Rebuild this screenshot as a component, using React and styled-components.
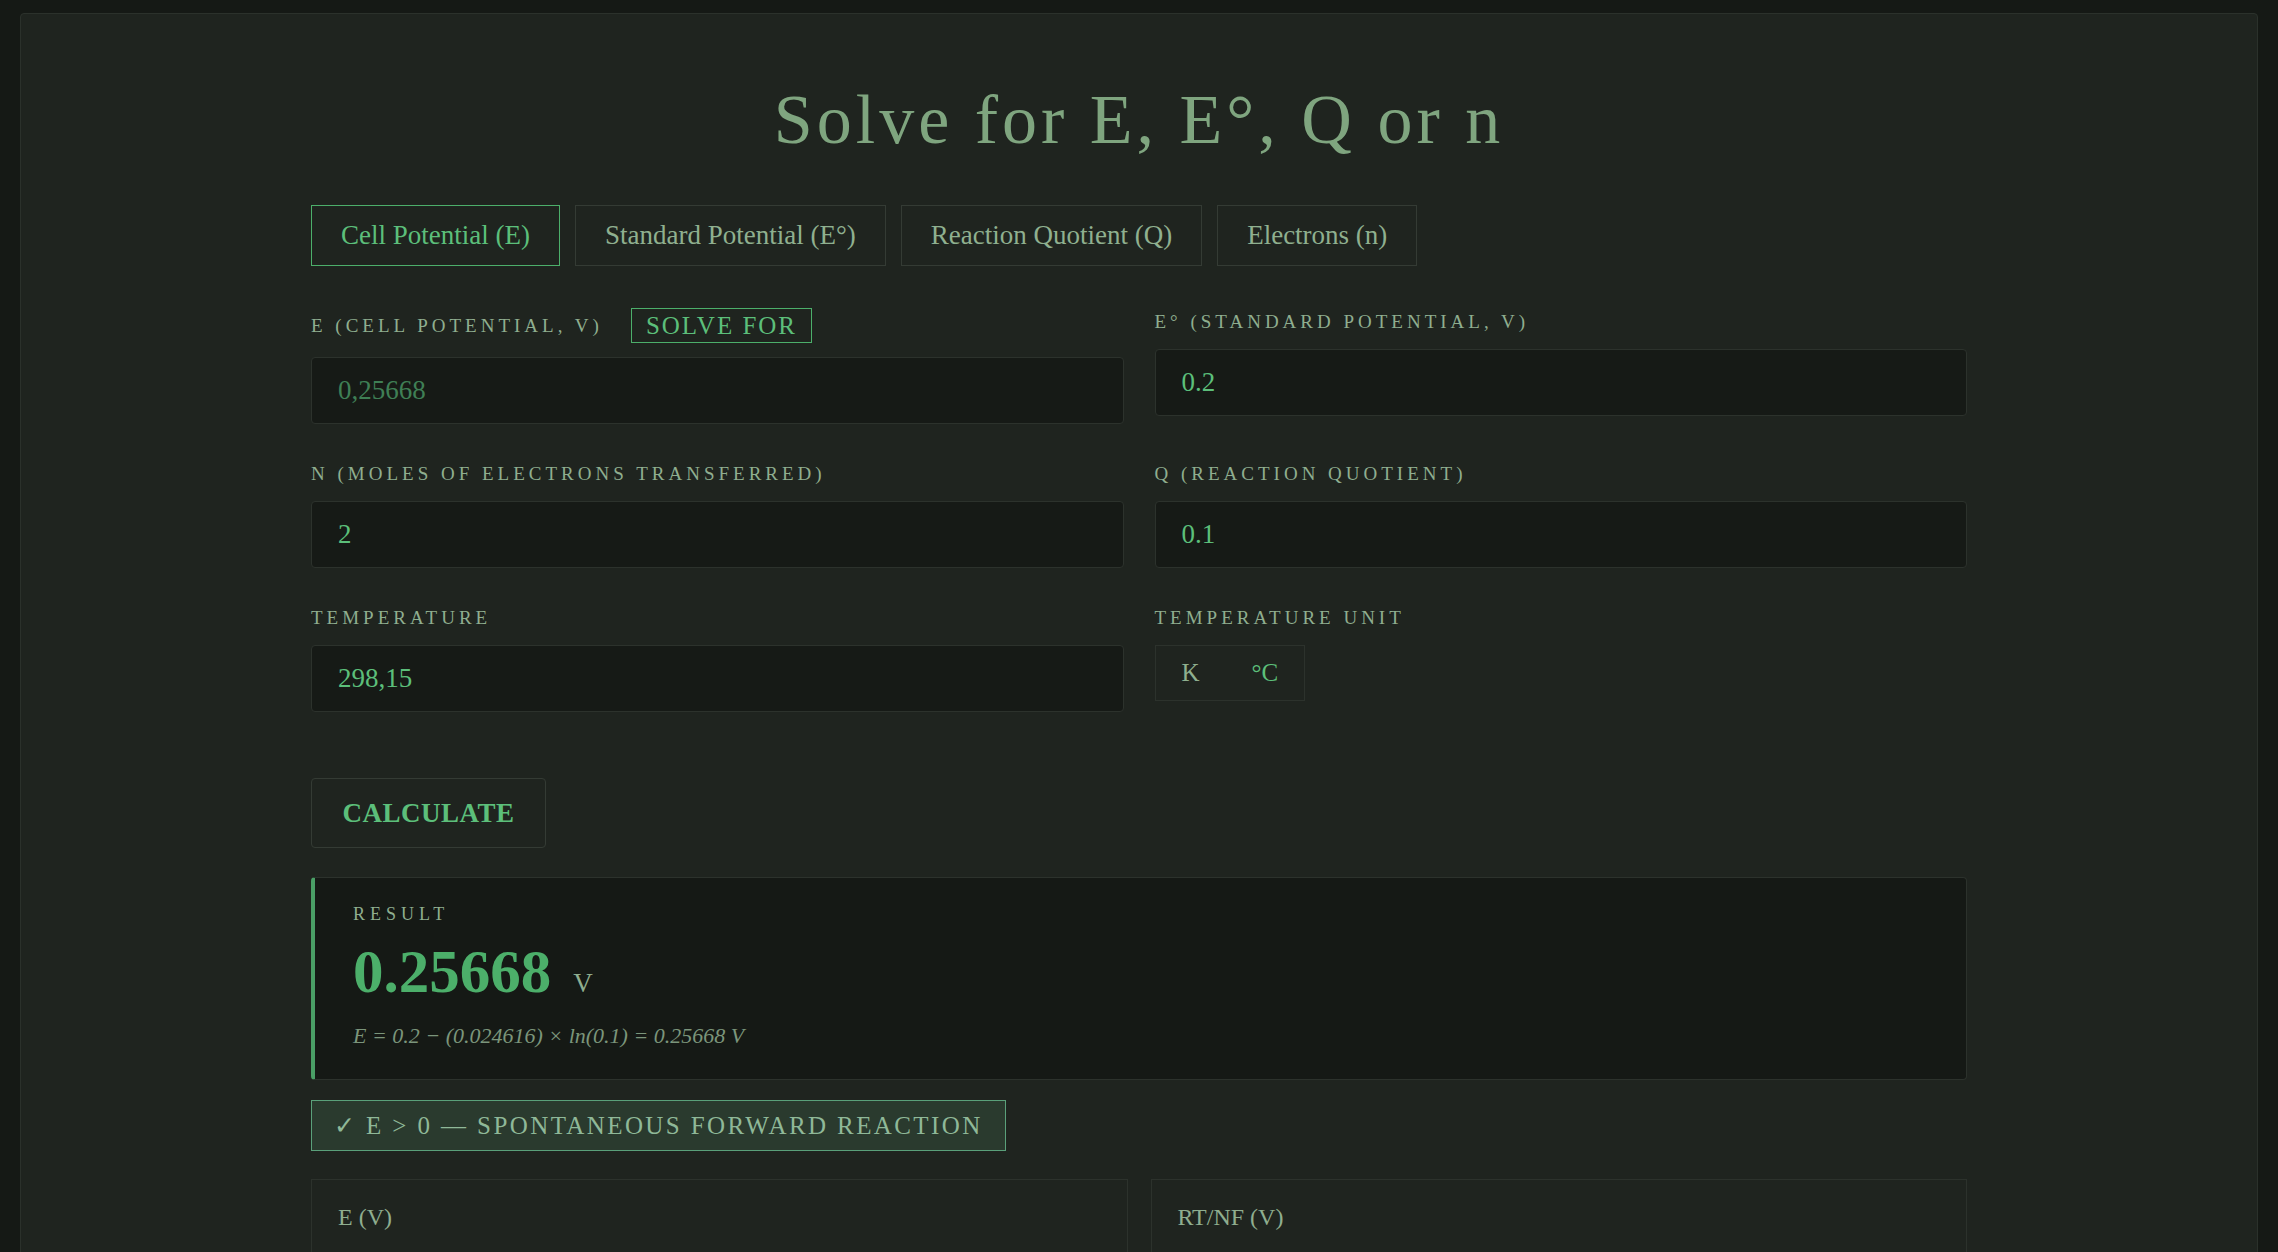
import React from "react";
import styled, { createGlobalStyle } from "styled-components";

const Global = createGlobalStyle`
  html, body { margin: 0; background: #151915; }
  body { font-family: "Liberation Serif", "DejaVu Serif", serif; }
`;

const Page = styled.div`
  padding: 13px 20px 0 20px;
  height: 1252px;
  box-sizing: border-box;
  overflow: hidden;
`;
const Panel = styled.div`
  background: #1f241f;
  border: 1px solid #2b312b;
  border-radius: 4px;
  height: 1300px;
  padding-top: 66px;
  box-sizing: border-box;
`;
const Column = styled.div`
  width: 1656px;
  margin: 0 auto;
  display: flex;
  flex-direction: column;
`;
const Title = styled.h1`
  margin: 0 0 45px;
  text-align: center;
  font-weight: 400;
  font-size: 70px;
  line-height: 80px;
  letter-spacing: 4px;
  color: #7fa57f;
`;
const Tabs = styled.div`
  display: flex;
  gap: 15px;
  margin-bottom: 42px;
`;
const Tab = styled.button`
  height: 61px;
  padding: 0 29px;
  background: transparent;
  border: 1px solid ${(p) => (p.$active ? "#4caf6a" : "#343b34")};
  color: ${(p) => (p.$active ? "#5cbf7a" : "#8fb08f")};
  font-family: inherit;
  font-size: 27px;
`;
const Grid = styled.div`
  display: grid;
  grid-template-columns: 1fr 1fr;
  column-gap: 31px;
  row-gap: 36px;
  align-items: start;
`;
const Field = styled.div`
  display: flex;
  flex-direction: column;
  gap: 14px;
`;
const LabelRow = styled.div`
  display: flex;
  align-items: center;
  gap: 28px;
  min-height: 27px;
`;
const Label = styled.span`
  font-size: 19px;
  letter-spacing: 4px;
  text-transform: uppercase;
  color: #8fae8f;
`;
const SolveBadge = styled.span`
  border: 1px solid #4caf6a;
  color: #5cbf7a;
  font-size: 25px;
  letter-spacing: 2px;
  padding: 3px 14px 2px;
`;
const Input = styled.div`
  height: 67px;
  box-sizing: border-box;
  background: #161a16;
  border: 1px solid #2c322c;
  border-radius: 4px;
  padding: 0 26px;
  display: flex;
  align-items: center;
  font-size: 27px;
  color: ${(p) => (p.$dim ? "#3f7f55" : "#5cbf7a")};
`;
const Units = styled.div`
  display: flex;
  align-self: flex-start;
  border: 1px solid #2c322c;
  height: 54px;
  align-items: center;
`;
const Unit = styled.span`
  padding: 0 26px;
  font-size: 25px;
  color: ${(p) => (p.$active ? "#8fb08f" : "#5cbf7a")};
`;
const Calc = styled.button`
  align-self: flex-start;
  margin-top: 66px;
  height: 70px;
  width: 235px;
  background: transparent;
  border: 1px solid #343b34;
  border-radius: 4px;
  font-family: inherit;
  font-weight: 700;
  font-size: 27px;
  color: #5cbf7a;
  letter-spacing: 0.5px;
`;
const Result = styled.div`
  margin-top: 29px;
  background: #151915;
  border: 1px solid #2c322c;
  border-left: 4px solid #4a9f66;
  border-radius: 4px;
  padding: 26px 38px 30px;
  display: flex;
  flex-direction: column;
`;
const ResultLabel = styled.span`
  font-size: 18px;
  letter-spacing: 5px;
  color: #8fae8f;
`;
const BigRow = styled.div`
  display: flex;
  align-items: baseline;
  gap: 22px;
  margin-top: 12px;
`;
const Big = styled.span`
  font-size: 61px;
  font-weight: 700;
  color: #4caf6a;
`;
const Small = styled.span`
  font-size: 27px;
  color: #8fae8f;
`;
const Formula = styled.div`
  margin-top: 16px;
  font-style: italic;
  font-size: 22px;
  color: #7b957b;
`;
const Spont = styled.div`
  margin-top: 20px;
  align-self: flex-start;
  background: #2a3a2e;
  border: 1px solid #5aa07a;
  padding: 10px 22px;
  font-size: 25px;
  letter-spacing: 2.4px;
  color: #8fb898;
`;
const Cards = styled.div`
  margin-top: 28px;
  display: grid;
  grid-template-columns: 1fr 1fr;
  gap: 23px;
`;
const Card = styled.div`
  border: 1px solid #2c322c;
  height: 150px;
  padding: 24px 26px;
  box-sizing: border-box;
  font-size: 24px;
  color: #8fae8f;
`;

export default function App() {
  return (
    <Page>
      <Global />
      <Panel>
        <Column>
          <Title>Solve for E, E°, Q or n</Title>
          <Tabs>
            <Tab $active>Cell Potential (E)</Tab>
            <Tab>Standard Potential (E°)</Tab>
            <Tab>Reaction Quotient (Q)</Tab>
            <Tab>Electrons (n)</Tab>
          </Tabs>
          <Grid>
            <Field>
              <LabelRow>
                <Label>E (Cell Potential, V)</Label>
                <SolveBadge>SOLVE FOR</SolveBadge>
              </LabelRow>
              <Input $dim>0,25668</Input>
            </Field>
            <Field>
              <LabelRow><Label>E° (Standard Potential, V)</Label></LabelRow>
              <Input>0.2</Input>
            </Field>
            <Field>
              <LabelRow><Label>n (Moles of Electrons Transferred)</Label></LabelRow>
              <Input>2</Input>
            </Field>
            <Field>
              <LabelRow><Label>Q (Reaction Quotient)</Label></LabelRow>
              <Input>0.1</Input>
            </Field>
            <Field>
              <LabelRow><Label>Temperature</Label></LabelRow>
              <Input>298,15</Input>
            </Field>
            <Field>
              <LabelRow><Label>Temperature Unit</Label></LabelRow>
              <Units>
                <Unit $active>K</Unit>
                <Unit>°C</Unit>
              </Units>
            </Field>
          </Grid>
          <Calc>CALCULATE</Calc>
          <Result>
            <ResultLabel>RESULT</ResultLabel>
            <BigRow>
              <Big>0.25668</Big>
              <Small>V</Small>
            </BigRow>
            <Formula>E = 0.2 − (0.024616) × ln(0.1) = 0.25668 V</Formula>
          </Result>
          <Spont>✓ E &gt; 0 — SPONTANEOUS FORWARD REACTION</Spont>
          <Cards>
            <Card>E (V)</Card>
            <Card>RT/NF (V)</Card>
          </Cards>
        </Column>
      </Panel>
    </Page>
  );
}
